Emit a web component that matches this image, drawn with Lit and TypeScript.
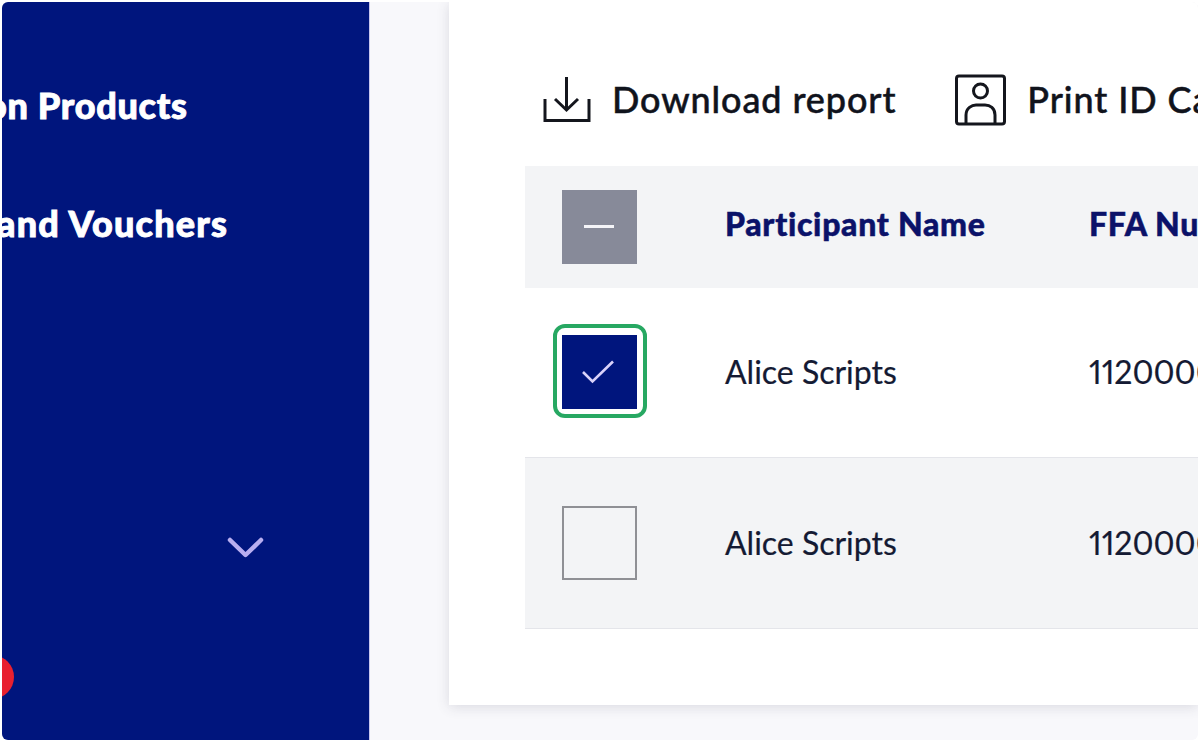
import { LitElement, html, css } from "lit";
import { customElement } from "lit/decorators.js";

@customElement("app-root")
export class AppRoot extends LitElement {
  static styles = css`
    :host { display: block; width: 1200px; height: 742px; background: #fff; font-family: Lato, "Open Sans", sans-serif; overflow: hidden; }
    .frame { box-sizing: border-box; height: 738px; margin: 2px; display: flex; background: #f8f8fb; border-radius: 6px; overflow: hidden; }
    .side { flex: 0 0 368px; background: #00157d; border-right: 1px solid #c9c6ee; box-sizing: border-box; display: flex; flex-direction: column; overflow: hidden; color: #fff; }
    .nav { font-size: 36px; font-weight: 900; line-height: 40px; letter-spacing: 0.7px; white-space: nowrap; -webkit-text-stroke: 0.9px #fff; }
    .nav.one { margin: 83px 0 0 -16px; }
    .nav.two { margin: 78px 0 0 -5px; letter-spacing: 1.2px; }
    .chev { align-self: flex-end; margin: 293px 105px 0 0; width: 37px; height: 23px; display: block; }
    .dot { width: 44px; height: 44px; border-radius: 50%; background: #e8202f; margin: 96px 0 0 -32px; flex: none; }
    .main { flex: 1; min-width: 0; padding-left: 79px; display: flex; align-items: flex-start; }
    .card { flex: 1; min-width: 0; height: 703px; background: #fff; overflow: hidden; box-shadow: 0 2px 12px rgba(60,60,90,.16); padding-left: 76px; box-sizing: border-box; }
    .bar { display: flex; align-items: center; height: 164px; padding-top: 30px; box-sizing: border-box; white-space: nowrap; font-size: 36px; font-weight: 500; letter-spacing: 0.9px; color: #10131c; -webkit-text-stroke: 0.5px #10131c; }
    .bar span { display: block; }
    .ic1 { width: 50px; height: 48px; margin: 0 19px 0 18px; flex: none; }
    .ic2 { width: 54px; height: 54px; margin: 2px 19px 0 58px; flex: none; }
    .table { width: 800px; }
    .row { display: grid; grid-template-columns: 200px 364px 1fr; align-items: center; font-size: 32px; color: #141a33; white-space: nowrap; }
    .head { height: 122px; background: #f3f4f6; color: #0b1269; font-weight: 900; font-size: 32px; letter-spacing: 0.7px; -webkit-text-stroke: 0.5px #0b1269; }
    .r1 { height: 169px; border-bottom: 1px solid #e4e5ea; box-sizing: content-box; }
    .r2 { height: 170px; background: #f3f4f6; border-bottom: 1px solid #e4e5ea; }
    .cellbox { padding-left: 37px; }
    .box { width: 75px; height: 74px; box-sizing: border-box; display: flex; align-items: center; justify-content: center; position: relative; }
    .box.mixed { background: #878a99; }
    .box.on { background: #00157d; top: -1px; }
    .box.off { border: 2px solid #8f9095; }
    .box svg { display: block; }
    .minus { margin: -2px 0 0 -1px; }
    .tick { margin: 0 3px 0 0; }
    .ring { position: absolute; left: -9px; top: -11px; width: 94px; height: 94px; box-sizing: border-box; border: 4px solid #27a862; border-radius: 12px; }
    .name { position: relative; top: -1px; -webkit-text-stroke: 0.2px #141a33; }
    .num { font-variant-numeric: proportional-nums; }
    .label { position: relative; top: -4px; }
  `;

  render() {
    return html`<div class="frame">
      <aside class="side">
        <div class="nav one">on Products</div>
        <div class="nav two">and Vouchers</div>
        <svg class="chev" viewBox="0 0 37 23"><path d="M3 4 18.5 19 34 4" fill="none" stroke="#b9aef0" stroke-width="4.5" stroke-linecap="round" stroke-linejoin="round"/></svg>
        <div class="dot"></div>
      </aside>
      <main class="main">
        <section class="card">
          <div class="bar">
            <svg class="ic1" viewBox="0 0 50 48" fill="none" stroke="#14161d" stroke-width="3"><path d="M23.5 2V35M12 24 23.5 35 35 24M2 24V45.5H46V24"/></svg>
            <span>Download report</span>
            <svg class="ic2" viewBox="0 0 54 54" fill="none" stroke="#14161d" stroke-width="3"><rect x="2.5" y="3" width="48" height="48" rx="2.5"/><circle cx="26.5" cy="18" r="7"/><path d="M12 50V42C12 35 18 32 22 32H31C36 32 41 35 41 42V50"/></svg>
            <span>Print ID Cards</span>
          </div>
          <div class="table">
            <div class="row head">
              <div class="cellbox"><div class="box mixed"><svg class="minus" width="30" height="3" viewBox="0 0 30 3"><rect width="30" height="3" fill="#f4f4f8"/></svg></div></div>
              <div class="label">Participant Name</div><div class="label">FFA Number</div>
            </div>
            <div class="row r1">
              <div class="cellbox"><div class="box on"><span class="ring"></span><svg class="tick" width="34" height="26" viewBox="0 0 34 26" fill="none"><path d="M2 13 11.5 22.5 32 2.5" stroke="#d9d2fa" stroke-width="2.6"/></svg></div></div>
              <div class="name">Alice Scripts</div><div class="name num">11200000</div>
            </div>
            <div class="row r2">
              <div class="cellbox"><div class="box off"></div></div>
              <div class="name">Alice Scripts</div><div class="name num">11200000</div>
            </div>
          </div>
        </section>
      </main>
    </div>`;
  }
}
